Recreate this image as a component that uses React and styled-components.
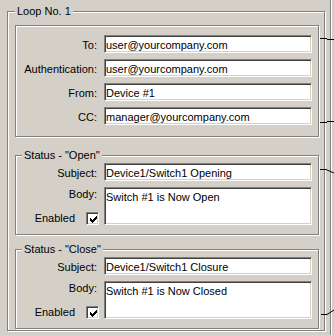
import React from "react";
import styled, { createGlobalStyle } from "styled-components";

const GlobalStyle = createGlobalStyle`
  html, body {
    margin: 0;
    padding: 0;
    background: #d4d0c8;
  }
  body {
    font-family: "Liberation Sans", Arial, sans-serif;
    font-size: 11px;
    color: #000;
  }
`;

const Screen = styled.div`
  position: relative;
  display: flex;
  align-items: flex-start;
  box-sizing: border-box;
  width: 334px;
  height: 335px;
  padding: 5px 0 0 7px;
  overflow: hidden;
`;

// etched look of a classic windows group box
const GroupBox = styled.fieldset`
  box-sizing: border-box;
  display: flex;
  flex-direction: column;
  min-width: 0;
  width: ${(p) => p.$width}px;
  margin: ${(p) => p.$margin || "0"};
  padding: ${(p) => p.$padding};
  border: 1px solid #808080;
  box-shadow: 1px 1px 0 #fff, inset 1px 1px 0 #fff;
`;

const Legend = styled.legend`
  padding: 0 2px;
  line-height: 13px;
  background: #d4d0c8;
`;

const AddressBox = styled.div`
  box-sizing: border-box;
  display: grid;
  grid-template-columns: 81px 208px;
  grid-auto-rows: 18px;
  column-gap: 7px;
  row-gap: 6px;
  width: 304px;
  padding: 9px 6px 11px 0;
  border: 1px solid #808080;
  box-shadow: 1px 1px 0 #fff, inset 1px 1px 0 #fff;
`;

const MessageGrid = styled.div`
  display: grid;
  grid-template-columns: 75px 208px;
  grid-template-rows: 18px 38px;
  column-gap: 7px;
  row-gap: 6px;
`;

const Label = styled.div`
  padding-top: 1px;
  line-height: 18px;
  text-align: right;
  white-space: nowrap;
`;

const SideCell = styled.div`
  display: flex;
  flex-direction: column;
  justify-content: space-between;
  align-items: flex-end;
`;

const TopLabel = styled.div`
  padding-top: 1px;
  line-height: 13px;
`;

const EnabledRow = styled.label`
  display: flex;
  align-items: center;
  gap: 11px;
  margin-right: -2px;
  line-height: 13px;
`;

const sunken = `
  box-sizing: border-box;
  margin: 0;
  border: 1px solid;
  border-color: #808080 #fff #fff #808080;
  box-shadow: inset 1px 1px 0 #404040, inset -1px -1px 0 #d4d0c8;
  background: #fff;
  color: #000;
  font: inherit;
  outline: none;
`;

const TextField = styled.input`
  ${sunken}
  width: 100%;
  height: 18px;
  padding: 1px 1px 0;
`;

const TextBody = styled.textarea`
  ${sunken}
  display: block;
  width: 100%;
  height: 38px;
  padding: 3px 1px 0;
  line-height: 13px;
  resize: none;
  overflow: hidden;
`;

const CheckBox = styled.span`
  ${sunken}
  display: block;
  width: 13px;
  height: 13px;
  svg {
    display: block;
  }
`;

const RightRail = styled.div`
  align-self: stretch;
  width: 3px;
  margin: -5px 0 0 5px;
  border-left: 1px solid #808080;
  box-shadow: inset 1px 0 0 #fff;
`;

const Wires = styled.svg`
  position: absolute;
  left: 318px;
  top: 0;
  width: 16px;
  height: 335px;
  pointer-events: none;
`;

const Check = () => (
  <CheckBox>
    <svg width="11" height="11" viewBox="-1 -1 11 11" shapeRendering="crispEdges">
      <path
        d="M2 4h1v3H2zM3 5h1v3H3zM4 6h1v3H4zM5 5h1v3H5zM6 4h1v3H6zM7 3h1v3H7zM8 2h1v3H8z"
        fill="#000"
      />
    </svg>
  </CheckBox>
);

const addressRows = [
  { label: "To:", value: "user@yourcompany.com" },
  { label: "Authentication:", value: "user@yourcompany.com" },
  { label: "From:", value: "Device #1" },
  { label: "CC:", value: "manager@yourcompany.com" },
];

const statusBlocks = [
  {
    title: 'Status - "Open"',
    subject: "Device1/Switch1 Opening",
    body: "Switch #1 is Now Open",
    margin: "12px 0 0 0",
  },
  {
    title: 'Status - "Close"',
    subject: "Device1/Switch1 Closure",
    body: "Switch #1 is Now Closed",
    margin: "8px 0 0 0",
  },
];

const StatusGroup = ({ title, subject, body, margin }) => (
  <GroupBox $width={304} $margin={margin} $padding="1px 6px 9px 6px">
    <Legend>{title}</Legend>
    <MessageGrid>
      <Label>Subject:</Label>
      <TextField readOnly value={subject} />
      <SideCell>
        <TopLabel>Body:</TopLabel>
        <EnabledRow>
          Enabled
          <Check />
        </EnabledRow>
      </SideCell>
      <TextBody readOnly value={body} />
    </MessageGrid>
  </GroupBox>
);

export default function App() {
  return (
    <>
      <GlobalStyle />
      <Screen>
        <GroupBox $width={318} $padding="7px 5px 1px 7px">
          <Legend>Loop No. 1</Legend>
          <AddressBox>
            {addressRows.map((row) => (
              <React.Fragment key={row.label}>
                <Label>{row.label}</Label>
                <TextField readOnly value={row.value} />
              </React.Fragment>
            ))}
          </AddressBox>
          {statusBlocks.map((block) => (
            <StatusGroup key={block.title} {...block} />
          ))}
        </GroupBox>
        <RightRail />
        <Wires viewBox="0 0 16 335" shapeRendering="crispEdges">
          <g stroke="#000" strokeWidth="1" fill="none">
            <path d="M2 38.5H9M9 39.5H16" />
            <path d="M2 122.5H9M9 121.5H16" />
            <path d="M2 169.5H8L16 173" shapeRendering="auto" />
            <path d="M3 314.5H9L16 310" shapeRendering="auto" />
          </g>
        </Wires>
      </Screen>
    </>
  );
}
